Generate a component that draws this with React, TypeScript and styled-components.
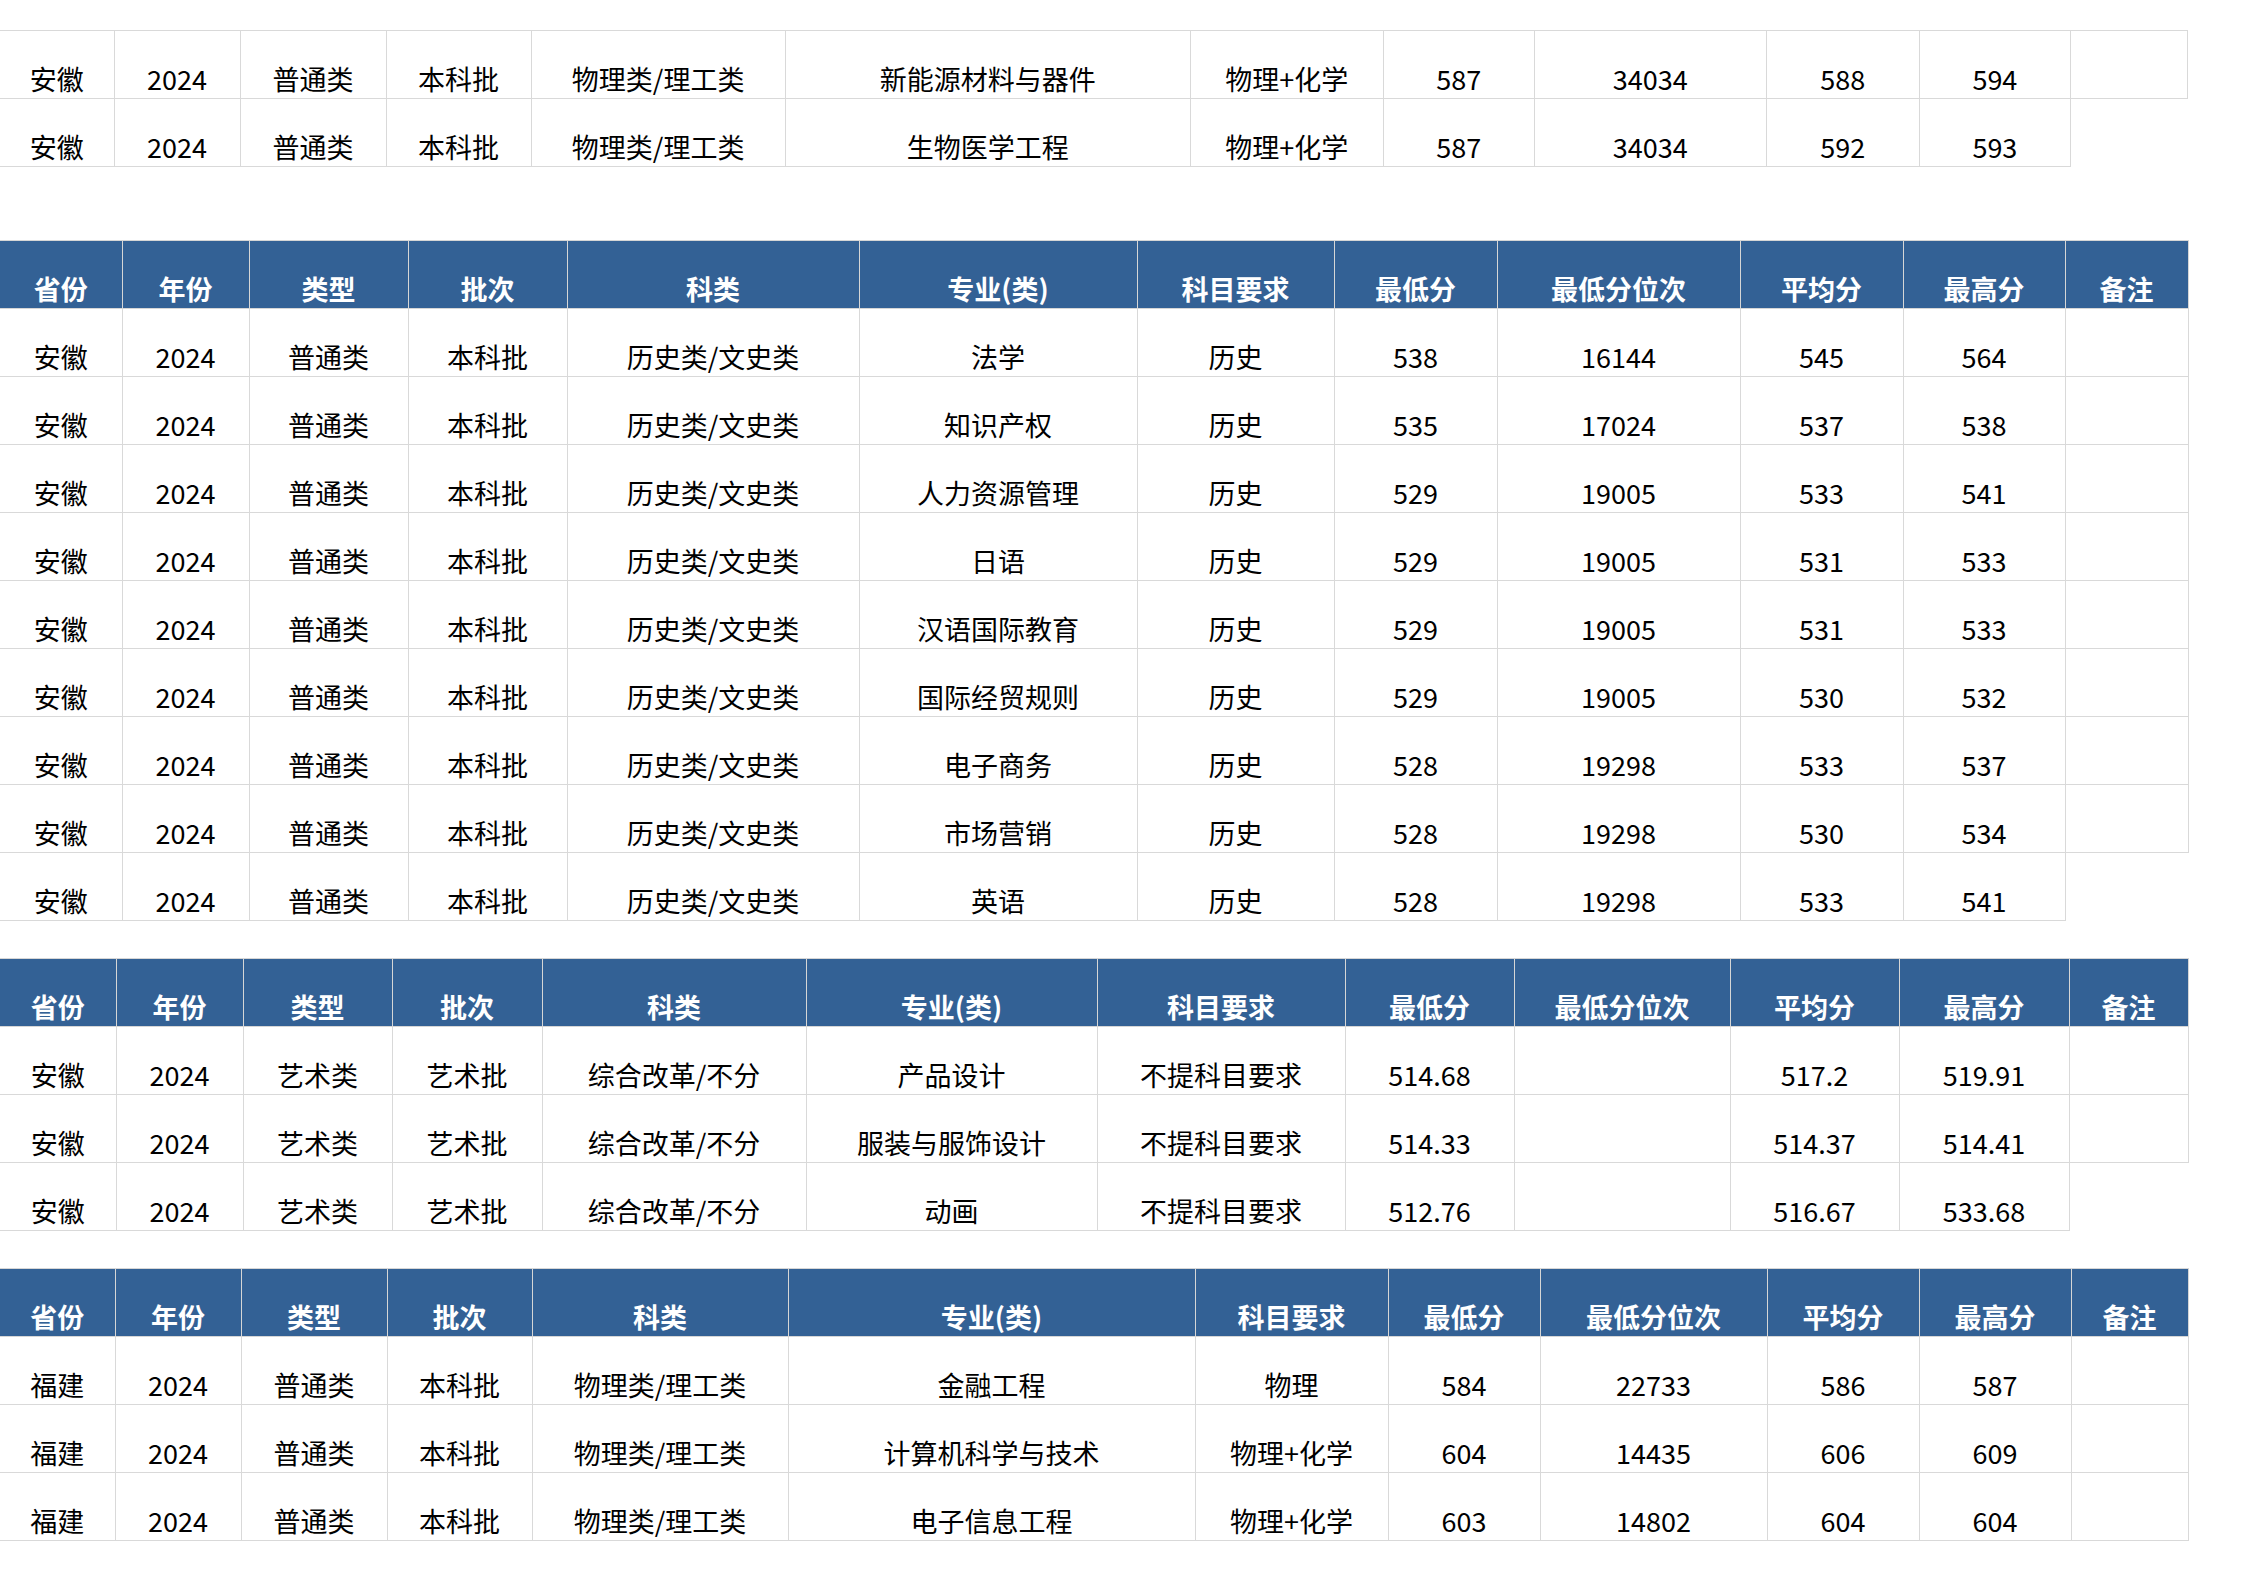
import styled, { createGlobalStyle } from 'styled-components'

const GlobalStyle = createGlobalStyle`
  html, body {
    margin: 0;
    padding: 0;
    background: #ffffff;
  }
  body {
    font-family: "Noto Sans CJK SC", "Noto Sans", sans-serif;
  }
`

type Block = {
  cols: number[]
  head: boolean
  rows: string[][]
  // last row has no 备注 cell borders
  openEnd: boolean
}

const HEAD = ['省份', '年份', '类型', '批次', '科类', '专业(类)', '科目要求', '最低分', '最低分位次', '平均分', '最高分', '备注']

const ah = (kl: string, zy: string, km: string, a: string, b: string, c: string, d: string) => [
  '安徽', '2024', '普通类', '本科批', kl, zy, km, a, b, c, d, '',
]

const blocks: Block[] = [
  {
    cols: [114, 126, 146, 145, 254, 405, 193, 151, 232, 153, 151, 117],
    head: false,
    openEnd: true,
    rows: [
      ah('物理类/理工类', '新能源材料与器件', '物理+化学', '587', '34034', '588', '594'),
      ah('物理类/理工类', '生物医学工程', '物理+化学', '587', '34034', '592', '593'),
    ],
  },
  {
    cols: [122, 127, 159, 159, 292, 278, 197, 163, 243, 163, 162, 123],
    head: true,
    openEnd: true,
    rows: [
      ah('历史类/文史类', '法学', '历史', '538', '16144', '545', '564'),
      ah('历史类/文史类', '知识产权', '历史', '535', '17024', '537', '538'),
      ah('历史类/文史类', '人力资源管理', '历史', '529', '19005', '533', '541'),
      ah('历史类/文史类', '日语', '历史', '529', '19005', '531', '533'),
      ah('历史类/文史类', '汉语国际教育', '历史', '529', '19005', '531', '533'),
      ah('历史类/文史类', '国际经贸规则', '历史', '529', '19005', '530', '532'),
      ah('历史类/文史类', '电子商务', '历史', '528', '19298', '533', '537'),
      ah('历史类/文史类', '市场营销', '历史', '528', '19298', '530', '534'),
      ah('历史类/文史类', '英语', '历史', '528', '19298', '533', '541'),
    ],
  },
  {
    cols: [116, 127, 149, 150, 264, 291, 248, 169, 216, 169, 170, 119],
    head: true,
    openEnd: true,
    rows: [
      ['安徽', '2024', '艺术类', '艺术批', '综合改革/不分', '产品设计', '不提科目要求', '514.68', '', '517.2', '519.91', ''],
      ['安徽', '2024', '艺术类', '艺术批', '综合改革/不分', '服装与服饰设计', '不提科目要求', '514.33', '', '514.37', '514.41', ''],
      ['安徽', '2024', '艺术类', '艺术批', '综合改革/不分', '动画', '不提科目要求', '512.76', '', '516.67', '533.68', ''],
    ],
  },
  {
    cols: [115, 126, 146, 145, 256, 407, 193, 152, 227, 152, 152, 117],
    head: true,
    openEnd: false,
    rows: [
      ['福建', '2024', '普通类', '本科批', '物理类/理工类', '金融工程', '物理', '584', '22733', '586', '587', ''],
      ['福建', '2024', '普通类', '本科批', '物理类/理工类', '计算机科学与技术', '物理+化学', '604', '14435', '606', '609', ''],
      ['福建', '2024', '普通类', '本科批', '物理类/理工类', '电子信息工程', '物理+化学', '603', '14802', '604', '604', ''],
    ],
  },
]

export default function App() {
  return (
    <>
      <GlobalStyle />
      <Sheet>
        {blocks.map((b, bi) => (
          <Table key={bi} $first={bi === 0}>
            <colgroup>
              {b.cols.map((w, i) => (
                <Col key={i} $w={w} />
              ))}
            </colgroup>
            {b.head && (
              <thead>
                <Row>
                  {HEAD.map((h) => (
                    <HeadCell key={h}>{h}</HeadCell>
                  ))}
                </Row>
              </thead>
            )}
            <tbody>
              {b.rows.map((r, ri) => {
                const last = ri === b.rows.length - 1
                return (
                  <Row key={ri}>
                    {r.map((c, ci) => (
                      <Cell key={ci} $open={b.openEnd && last && ci === r.length - 1}>
                        {c}
                      </Cell>
                    ))}
                  </Row>
                )
              })}
            </tbody>
          </Table>
        ))}
      </Sheet>
    </>
  )
}

const Sheet = styled.div`
  width: 2245px;
  padding-top: 30px;
  display: flex;
  flex-direction: column;
  gap: 37px;
`

const Table = styled.table<{ $first: boolean }>`
  border-collapse: collapse;
  table-layout: fixed;
  width: 2188px;
  margin-bottom: ${(p) => (p.$first ? '36px' : '0')};
  border-top: 1px solid #d4d4d4;
`

const Col = styled.col<{ $w: number }>`
  width: ${(p) => p.$w}px;
`

const Row = styled.tr`
  height: 68px;
`

const HeadCell = styled.th`
  background: #336195;
  color: #ffffff;
  font-size: 27px;
  font-weight: 700;
  line-height: 32px;
  text-align: center;
  vertical-align: bottom;
  padding: 0 0 3px;
  border: 1px solid #d6d6d6;
  white-space: nowrap;

  &:first-child {
    border-left: none;
  }
`

const Cell = styled.td<{ $open: boolean }>`
  color: #000000;
  font-size: 27px;
  font-weight: 400;
  line-height: 32px;
  text-align: center;
  vertical-align: bottom;
  padding: 0 0 3px;
  border: ${(p) => (p.$open ? 'none' : '1px solid #d9d9d9')};
  white-space: nowrap;

  &:first-child {
    border-left: none;
  }
`
